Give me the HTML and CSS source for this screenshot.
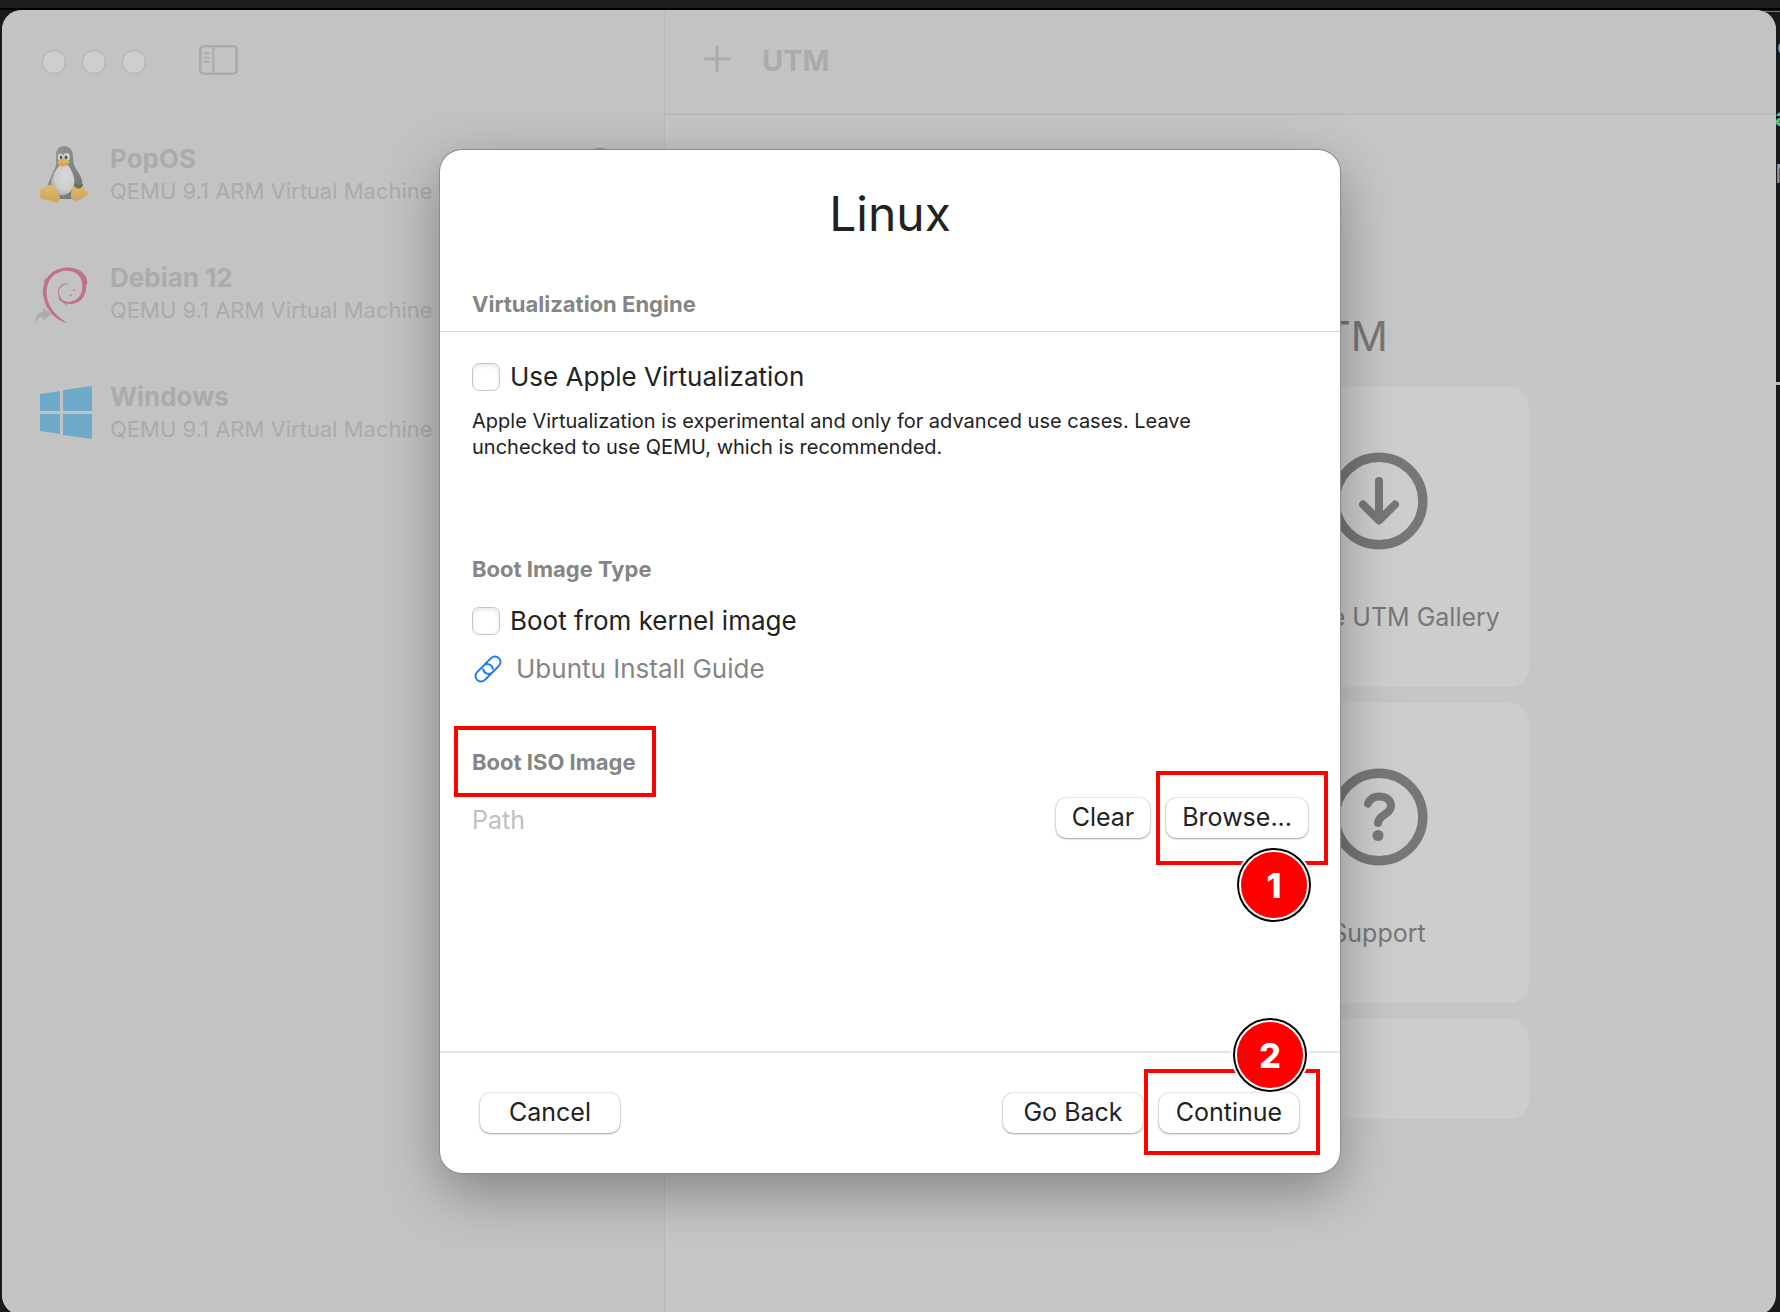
FILE: index.html
```html
<!DOCTYPE html>
<html lang="en">
<head>
<meta charset="utf-8">
<meta name="viewport" content="width=device-width, initial-scale=1">
<title>UTM</title>
<link rel="stylesheet" href="styles.css">
</head>
<body>
<div class="desktop">
  <div class="backdrop" aria-hidden="true">
    <span class="backdrop-text backdrop-text-top">e</span>
    <span class="backdrop-text backdrop-text-green">a</span>
    <span class="backdrop-text backdrop-text-low">M</span>
    <span class="backdrop-rule"></span>
  </div>

  <div class="window">
    <aside class="sidebar">
      <div class="titlebar">
        <div class="lights"><span class="light"></span><span class="light"></span><span class="light"></span></div>
        <button class="icon-button" type="button" aria-label="Toggle sidebar">
          <svg width="39" height="30" viewBox="0 0 39 30" fill="none" stroke="currentColor">
            <rect x="1.300" y="1.300" width="36.400" height="27.400" rx="3.500" stroke-width="2.600"/>
            <path d="M14.300 1.500v27" stroke-width="2"/>
            <path d="M5.500 8.300h4.500M5.500 12.600h4.500M5.500 16.900h4.500" stroke-width="1.800" stroke-linecap="round"/>
          </svg>
        </button>
      </div>
      <ul class="machines">
        <li class="machine">
          <svg class="machine-icon" width="64" height="64" viewBox="0 0 64 64">
            <defs>
              <linearGradient id="coat" x1="0" y1="0" x2="1" y2="1"><stop offset="0" stop-color="#999"/><stop offset="1" stop-color="#727272"/></linearGradient>
              <radialGradient id="belly" cx=".6" cy=".4" r=".7"><stop offset="0" stop-color="#d8d8d8"/><stop offset=".6" stop-color="#cdcdcd"/><stop offset="1" stop-color="#a4a4a4"/></radialGradient>
              <linearGradient id="foot" x1="0" y1="0" x2="0" y2="1"><stop offset="0" stop-color="#ddbb66"/><stop offset="1" stop-color="#d1a45c"/></linearGradient>
            </defs>
            <path d="M24 14C24 7 27 4 32 4s9 4 9 10c0 7 1 10 5 16 4 6 5 10 4 15-1 4-3 6-5 8l-4 4H23l-6-7c-3-5-1-8 1-13l4-9c3-4 2-8 2-14z" fill="url(#coat)"/>
            <path d="M24 28c3-5 5-6 8-5 4-1 6 2 8 7 3 6 3 11 1 16-3 6-9 8-13 7-5-1-9-6-9-10 0-6 2-10 5-15z" fill="url(#belly)"/>
            <ellipse cx="28.500" cy="15" rx="2.800" ry="3.600" fill="#d2d2d2"/><ellipse cx="34.500" cy="15" rx="3.300" ry="3.900" fill="#d2d2d2"/>
            <ellipse cx="29" cy="15.500" rx="1.200" ry="2" fill="#515151"/><ellipse cx="34" cy="15.500" rx="1.400" ry="2.100" fill="#515151"/>
            <path d="M25 20c2-1 4-4 7-3 2 0 4 2 6 3-1 2-5 4-7 5-2 0-5-2-6-5z" fill="#dcb357"/><path d="M26 21c3 2 6 2 11 0" fill="none" stroke="#bc954c" stroke-width=".7"/>
            <path d="M17 43c3-1 5 1 8 6 2 4 4 6 3 9-1 3-5 3-9 1-5-2-10-1-11-4-1-2 1-3 0-6 0-3 4-2 9-6z" fill="url(#foot)"/>
            <path d="M41 43c3 4 6 4 9 0 3 2 1 5 6 7 1 3-2 4-7 7-4 3-8 2-10-1-1-3 1-8 2-13z" fill="url(#foot)"/>
            <path d="M43 42c3 4 5 4 7 0" stroke="#6c6c6c" stroke-width="3" fill="none"/>
          </svg>
          <div class="machine-text"><strong class="machine-name">PopOS</strong><span class="machine-kind">QEMU 9.1 ARM Virtual Machine</span></div>
          <span class="play"></span>
        </li>
        <li class="machine">
          <svg class="machine-icon" width="64" height="64" viewBox="0 0 64 64">
            <path d="M55 20c-1-10-13-15-24-13C18 9 10 20 11 34c2 12 10 25 24 28-9-6-19-15-20-26-2-14 4-23 16-26 10-1 18 3 19 12 2 10-4 18-13 19-6 0-10-4-10-10 0-5 4-8 10-8-7-2-11 3-11 9 0 7 5 11 12 11 10 0 17-8 16-19 2-1 1-2 1-4z" fill="#be728a"/>
            <path d="M12 21l2-4m-1 22l2 7M27 38l8 6M42 28v2M37 34h3M54 18l1 5" stroke="#be728a" fill="none"/>
            <path d="M3 63c0-8 3-12 8-12v-4l8 6-8 7v-4c-4 0-6 2-8 7z" fill="#ababab"/>
          </svg>
          <div class="machine-text"><strong class="machine-name">Debian 12</strong><span class="machine-kind">QEMU 9.1 ARM Virtual Machine</span></div>
        </li>
        <li class="machine">
          <svg class="machine-icon" width="64" height="64" viewBox="0 0 64 64" fill="#6faaca">
            <path d="M8 14l20-3v20H8zM31 10l29-4v25H31zM8 34h20v20L8 51zM31 34h29v25l-29-4z"/>
          </svg>
          <div class="machine-text"><strong class="machine-name">Windows</strong><span class="machine-kind">QEMU 9.1 ARM Virtual Machine</span></div>
        </li>
      </ul>
    </aside>

    <main class="content">
      <header class="toolbar">
        <button class="icon-button" type="button" aria-label="New virtual machine">
          <svg width="28" height="28" viewBox="0 0 28 28" fill="none" stroke="currentColor" stroke-width="3" stroke-linecap="round"><path d="M14 2v24M2 14h24"/></svg>
        </button>
        <h1 class="toolbar-title">UTM</h1>
      </header>
      <section class="welcome">
        <h2 class="welcome-title">Welcome to UTM</h2>
        <div class="cards">
          <div class="card"></div>
          <button class="card" type="button">
            <svg class="card-icon" width="98" height="98" viewBox="0 0 98 98" fill="none" stroke="currentColor" stroke-linecap="round" stroke-linejoin="round">
              <circle cx="49" cy="49" r="43.800" stroke-width="9.400"/>
              <path d="M49 29v39M33 52.500l16 16 16-16" stroke-width="8"/>
            </svg>
            <span>Browse UTM Gallery</span>
          </button>
          <div class="card"></div>
          <button class="card" type="button">
            <svg class="card-icon" width="98" height="98" viewBox="0 0 98 98" fill="none" stroke="currentColor" stroke-linecap="round" stroke-linejoin="round">
              <circle cx="49" cy="49" r="43.800" stroke-width="9.400"/>
              <path d="M38 35.500C40 31 44 28.500 49 28.500c7 0 12 3.500 12 9.500 0 8-13 9.500-13 17" stroke-width="8"/>
              <circle cx="48" cy="67.500" r="5.500" fill="currentColor" stroke="none"/>
            </svg>
            <span>Support</span>
          </button>
          <div class="card card-wide"></div>
        </div>
      </section>
    </main>

    <form class="sheet" role="dialog" aria-labelledby="sheet-title">
      <h2 class="sheet-title" id="sheet-title">Linux</h2>
      <section class="group group-engine">
        <h3 class="group-title">Virtualization Engine</h3>
        <div class="group-body">
          <label class="check"><input class="box" type="checkbox">Use Apple Virtualization</label>
          <p class="note">Apple Virtualization is experimental and only for advanced use cases. Leave<br>unchecked to use QEMU, which is recommended.</p>
        </div>
      </section>
      <section class="group group-type">
        <h3 class="group-title">Boot Image Type</h3>
        <div class="group-body">
          <label class="check"><input class="box" type="checkbox">Boot from kernel image</label>
          <a class="guide" href="#">
            <svg width="28" height="28" viewBox="-14 -14 28 28" fill="none" stroke="#1a7cff" stroke-width="2" stroke-linecap="round">
              <g transform="rotate(-45)">
                <path d="M1.500-5.500H9.900a5.500 5.500 0 0 1 0 11H.9A5.500 5.500 0 0 1-3.600-3.200"/>
                <path d="M-1.500 5.500H-9.900a5.500 5.500 0 0 1 0-11H-.9A5.500 5.500 0 0 1 3.600 3.200"/>
              </g>
            </svg>
            Ubuntu Install Guide
          </a>
        </div>
      </section>
      <section class="group group-iso">
        <h3 class="group-title"><label class="marked" for="path">Boot ISO Image<span class="mark mark-iso"></span></label></h3>
        <div class="group-body path-row">
          <input class="path" id="path" type="text" placeholder="Path" readonly>
          <button class="push" type="button">Clear</button>
          <div class="marked">
            <button class="push" type="button">Browse...</button>
            <span class="mark mark-browse"></span>
            <span class="step step-browse">1</span>
          </div>
        </div>
      </section>
      <footer class="actions">
        <button class="push push-wide" type="button">Cancel</button>
        <span class="spacer"></span>
        <button class="push push-wide" type="button">Go Back</button>
        <div class="marked">
          <button class="push push-wide" type="button">Continue</button>
          <span class="mark mark-continue"></span>
          <span class="step step-continue">2</span>
        </div>
      </footer>
    </form>
  </div>
</div>
</body>
</html>
```
FILE: styles.css
```css
* { box-sizing: border-box; }

body {
  margin: 0;
  background: #17191a;
  color: #222;
  font-family: Inter, "Liberation Sans", sans-serif;
  font-size: 25px;
  line-height: 28px;
}

h1, h2, h3, p, ul { margin: 0; padding: 0; }
button, input { font: inherit; color: inherit; }
button { border: 0; padding: 0; background: none; }
svg { display: block; flex: none; }

/* Desktop behind the window */
.desktop {
  position: relative;
  height: 100vh;
  min-height: 1250px;
  padding: 10px 4px 0 2px;
  overflow: hidden;
  background: linear-gradient(#1e1e1e 8px, #000 8px, #000 10px, #17191a 10px);
}
.backdrop {
  position: absolute;
  inset: 11px 0 0 auto;
  width: 20px;
  border-top: 1px solid #777;
  overflow: hidden;
}
.backdrop-text { position: absolute; left: 17px; color: #999; }
.backdrop-text-top { top: 20px; }
.backdrop-text-green { top: 91px; left: 15px; color: #63b784; font-weight: 700; }
.backdrop-text-low { top: 148px; left: 15px; }
.backdrop-rule { position: absolute; top: 370px; right: 0; width: 4px; height: 3px; background: #bbb; }

/* Main window */
.window {
  position: relative;
  display: grid;
  grid-template-columns: 663px 1fr;
  height: calc(100% + 3px);
  overflow: hidden;
  border-radius: 20px;
  background: #c6c6c6;
  color: #ababab;
}
.sidebar { border-right: 1px solid #b9b9b9; background: #c3c3c3; }
.titlebar { display: flex; align-items: center; gap: 53px; height: 104px; padding: 0 40px; }
.lights { display: flex; gap: 16px; }
.light { width: 24px; height: 24px; border: 1px solid #b0b0b0; border-radius: 50%; background: #cecece; }
.icon-button { margin-top: -4px; }

.machines { list-style: none; }
.machine { display: flex; align-items: center; gap: 14px; height: 119px; padding: 0 38px 0 30px; }
.machine-text { display: flex; flex: 1; flex-direction: column; gap: 3px; padding-top: 1px; white-space: nowrap; }
.machine-name { font-size: 26px; font-weight: 700; line-height: 30px; }
.machine-kind { font-size: 22px; line-height: 28px; }
.play { width: 52px; height: 52px; border: 4px solid #8c8c8c; border-radius: 50%; }

.toolbar {
  display: flex;
  align-items: center;
  gap: 31px;
  height: 105px;
  padding: 0 38px 2px;
  border-bottom: 1px solid #b4b4b4;
  background: #c3c3c3;
}
.toolbar-title { font-size: 29px; font-weight: 700; line-height: 36px; }

.welcome { display: flex; flex-direction: column; align-items: center; padding-top: 194px; color: #777; }
.welcome-title { font-size: 41px; font-weight: 400; line-height: 54px; }
.cards { display: grid; grid-template-columns: 300px 300px; gap: 16px; margin-top: 24px; }
.card {
  display: flex;
  flex-direction: column;
  align-items: center;
  gap: 53px;
  height: 300px;
  padding-top: 65px;
  border-radius: 20px;
  background: #cdcdcd;
}
.card-wide { grid-column: span 2; height: 100px; }

/* New machine sheet, shown over the window */
.sheet {
  position: absolute;
  top: 140px;
  left: 50%;
  width: 900px;
  max-width: 90%;
  margin-left: -449px;
  padding-top: 34px;
  border-radius: 22px;
  background: #fff;
  box-shadow: 0 0 0 1px #8c8c8c, 0 18px 56px rgba(0, 0, 0, .34);
  color: #222;
}
.sheet-title { font-size: 48px; font-weight: 400; line-height: 60px; text-align: center; }
.group-title { padding: 0 32px; color: #858585; font-size: 22px; font-weight: 700; line-height: 30px; }
.group-body { padding: 0 32px; }
.group-engine { margin-top: 45px; }
.group-engine .group-title { padding-bottom: 12px; border-bottom: 1px solid #d8d8d8; }
.group-engine .group-body { padding-top: 31px; }
.group-type { margin-top: 94px; }
.group-type .group-body { padding-top: 23px; }
.group-iso { margin-top: 64px; padding-bottom: 213px; }

.check { display: flex; gap: 10px; font-size: 26px; }
.box {
  appearance: none;
  width: 28px;
  height: 28px;
  margin: 0;
  border: 1px solid #c6c6c6;
  border-radius: 7px;
  background: #fff;
  box-shadow: inset 0 2px 4px rgba(0, 0, 0, .1);
}
.note { margin-top: 17px; font-size: 20px; line-height: 26px; }
.guide { display: flex; gap: 14px; margin-top: 20px; padding-left: 2px; color: #858585; font-size: 26px; text-decoration: none; }

.path-row { display: flex; align-items: center; gap: 16px; margin-top: 21px; }
.path { flex: 1; min-width: 0; height: 40px; padding: 4px 0 0; border: 0; outline: 0; background: none; }
.path::placeholder { color: #c0c0c0; opacity: 1; }

.push {
  display: block;
  height: 40px;
  padding: 0 16px 2px;
  border-radius: 10px;
  background: #fff;
  box-shadow: 0 0 2px rgba(0, 0, 0, .3), 0 1px 2px rgba(0, 0, 0, .3);
}
.push-wide { width: 140px; padding: 0 0 2px; }
.actions { display: flex; gap: 16px; padding: 40px 41px 40px 40px; border-top: 2px solid #e6e6e6; }
.spacer { flex: 1; }

/* Tutorial annotations */
.marked { position: relative; }
.mark { position: absolute; border: 4px solid #f00; pointer-events: none; }
.mark-iso { inset: -23px -20px -22px -18px; }
.mark-browse { inset: -27px -20px -27px -10px; }
.mark-continue { inset: -24px -21px -22px -15px; }
.step {
  position: absolute;
  width: 70px;
  height: 70px;
  border: 2px solid #fff;
  border-radius: 50%;
  background: #f00;
  box-shadow: 0 0 0 2px #000, 0 0 0 4px #fff;
  color: #fff;
  font-size: 34px;
  font-weight: 800;
  line-height: 68px;
  text-align: center;
}
.step-browse { top: 52px; right: -1px; }
.step-continue { top: -73px; right: -6px; }
```
